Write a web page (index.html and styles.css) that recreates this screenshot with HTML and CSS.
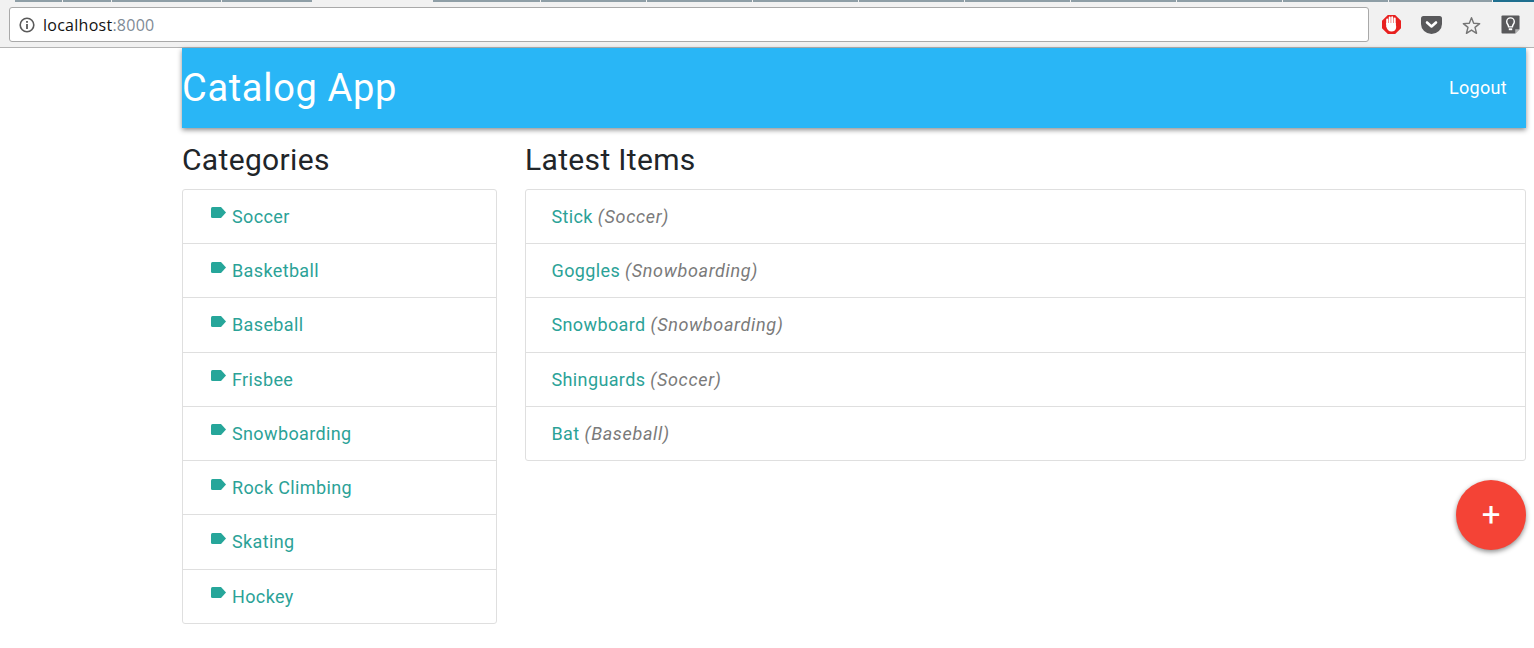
FILE: index.html
```html
<!DOCTYPE html>
<html lang="en">
<head>
<meta charset="utf-8">
<title>Catalog App</title>
<link rel="stylesheet" href="styles.css">
</head>
<body>
<div class="chrome">
  <div class="tabs">
    <span class="tab t-a"></span><span class="tab t-b"></span><span class="tab t-c"></span><span class="tab t-d"></span><span class="tab t-e"></span>
    <span class="tab-active"></span>
    <span class="tab t-first"></span><span class="tab t-n"></span><span class="tab t-n"></span><span class="tab t-n"></span><span class="tab t-n"></span><span class="tab t-n"></span><span class="tab t-n"></span><span class="tab t-n"></span><span class="tab t-n"></span><span class="tab t-end"></span>
    <span class="tab t-last"></span>
  </div>
  <div class="toolbar">
    <div class="omnibox">
      <svg class="info" width="16" height="16" viewBox="0 0 16 16"><circle cx="8" cy="8" r="6.8" fill="none" stroke="#5a5a5a" stroke-width="1.6"/><rect x="7.1" y="7" width="1.8" height="5" fill="#5a5a5a"/><rect x="7.1" y="4" width="1.8" height="1.8" fill="#5a5a5a"/></svg>
      <span class="host">localhost</span><span class="port">:8000</span>
    </div>
    <div class="exts">
      <svg class="ext" width="19" height="19" viewBox="0 0 19 19"><polygon points="5.8,0 13.2,0 19,5.8 19,13.2 13.2,19 5.8,19 0,13.2 0,5.8" fill="#e8201f"/><path d="M5.2 9 V4.6 M7.7 9 V2.6 M10.2 9 V2.2 M12.7 9 V3.4" fill="none" stroke="#fff" stroke-width="2" stroke-linecap="round"/><path d="M4.2 8 H13.7 L14.2 12 C14.2 15 12 16.6 9.5 16.6 C6.8 16.6 5.2 15 4.2 11.5 Z" fill="#fff"/></svg>
      <svg class="ext" width="21" height="18" viewBox="0 0 21 18"><path d="M0 2.5 Q0 0 2.5 0 H18.5 Q21 0 21 2.5 V8 A10.5 10 0 0 1 0 8 Z" fill="#59595b"/><path d="M6 6.5 L10.5 10.5 L15 6.5" fill="none" stroke="#fff" stroke-width="2.6" stroke-linecap="round" stroke-linejoin="round"/></svg>
      <svg class="ext star" width="19" height="19" viewBox="0 0 20 20"><polygon points="10,1.8 12.3,7.6 18.6,8 13.7,12 15.3,18.2 10,14.8 4.7,18.2 6.3,12 1.4,8 7.7,7.6" fill="none" stroke="#757575" stroke-width="1.5" stroke-linejoin="round"/></svg>
      <svg class="ext" width="19" height="19" viewBox="0 0 20 20"><path d="M1.5 0.5 H18.5 Q19.5 0.5 19.5 1.5 V15 L15 19.5 H1.5 Q0.5 19.5 0.5 18.5 V1.5 Q0.5 0.5 1.5 0.5 Z" fill="#59595b"/><path d="M15 19.5 V15 H19.5 Z" fill="#b5b5b5"/><path d="M8 12.5 C8 10 6 9.5 6 7 A4 4 0 0 1 14 7 C14 9.5 12 10 12 12.5 Z" fill="none" stroke="#fff" stroke-width="1.5"/><rect x="8.2" y="14" width="3.6" height="2" fill="#fff"/></svg>
    </div>
  </div>
</div>
<div class="page">
  <header class="appbar">
    <a class="brand">Catalog App</a>
    <a class="logout">Logout</a>
  </header>
  <main class="columns">
    <section class="col-side">
      <h3 class="heading">Categories</h3>
      <ul class="list">
        <li class="row"><svg class="tag" width="15" height="11" viewBox="0 0 15 11"><path d="M1.5 0 H10 L15 5.5 L10 11 H1.5 Q0 11 0 9.5 V1.5 Q0 0 1.5 0 Z"/></svg><a class="link">Soccer</a></li>
        <li class="row"><svg class="tag" width="15" height="11" viewBox="0 0 15 11"><path d="M1.5 0 H10 L15 5.5 L10 11 H1.5 Q0 11 0 9.5 V1.5 Q0 0 1.5 0 Z"/></svg><a class="link">Basketball</a></li>
        <li class="row"><svg class="tag" width="15" height="11" viewBox="0 0 15 11"><path d="M1.5 0 H10 L15 5.5 L10 11 H1.5 Q0 11 0 9.5 V1.5 Q0 0 1.5 0 Z"/></svg><a class="link">Baseball</a></li>
        <li class="row"><svg class="tag" width="15" height="11" viewBox="0 0 15 11"><path d="M1.5 0 H10 L15 5.5 L10 11 H1.5 Q0 11 0 9.5 V1.5 Q0 0 1.5 0 Z"/></svg><a class="link">Frisbee</a></li>
        <li class="row"><svg class="tag" width="15" height="11" viewBox="0 0 15 11"><path d="M1.5 0 H10 L15 5.5 L10 11 H1.5 Q0 11 0 9.5 V1.5 Q0 0 1.5 0 Z"/></svg><a class="link">Snowboarding</a></li>
        <li class="row"><svg class="tag" width="15" height="11" viewBox="0 0 15 11"><path d="M1.5 0 H10 L15 5.5 L10 11 H1.5 Q0 11 0 9.5 V1.5 Q0 0 1.5 0 Z"/></svg><a class="link">Rock Climbing</a></li>
        <li class="row"><svg class="tag" width="15" height="11" viewBox="0 0 15 11"><path d="M1.5 0 H10 L15 5.5 L10 11 H1.5 Q0 11 0 9.5 V1.5 Q0 0 1.5 0 Z"/></svg><a class="link">Skating</a></li>
        <li class="row"><svg class="tag" width="15" height="11" viewBox="0 0 15 11"><path d="M1.5 0 H10 L15 5.5 L10 11 H1.5 Q0 11 0 9.5 V1.5 Q0 0 1.5 0 Z"/></svg><a class="link">Hockey</a></li>
      </ul>
    </section>
    <section class="col-main">
      <h3 class="heading">Latest Items</h3>
      <ul class="list">
        <li class="row row-item"><a class="link">Stick</a> <em class="cat">(Soccer)</em></li>
        <li class="row row-item"><a class="link">Goggles</a> <em class="cat">(Snowboarding)</em></li>
        <li class="row row-item"><a class="link">Snowboard</a> <em class="cat">(Snowboarding)</em></li>
        <li class="row row-item"><a class="link">Shinguards</a> <em class="cat">(Soccer)</em></li>
        <li class="row row-item"><a class="link">Bat</a> <em class="cat">(Baseball)</em></li>
      </ul>
      <div class="fab-wrap"><button class="fab">+</button></div>
    </section>
  </main>
</div>
</body>
</html>
```
FILE: styles.css
```css
* { box-sizing: border-box; }
html, body { margin: 0; padding: 0; }
body {
  background: #fff;
  font-family: Roboto, "Liberation Sans", sans-serif;
  color: #212529;
  overflow: hidden;
  height: 648px;
}
.chrome {
  height: 48px;
  background: #f1f1f1;
  border-bottom: 1px solid #b4b4b4;
}
.tabs { display: flex; height: 2px; }
.tab { display: block; height: 2px; background: #8e9ea6; border-right: 1px solid #f1f1f1; }
.t-a { width: 15px; background: transparent; border: 0; }
.t-b { width: 48px; }
.t-c { width: 49px; }
.t-d { width: 110px; }
.t-e { width: 91px; }
.tab-active { display: block; width: 120px; }
.t-first { width: 108px; }
.t-n { width: 106px; }
.t-end { width: 104px; }
.t-last { flex: 1; background: #1f6f8f; border: 0; }
.toolbar {
  display: flex;
  align-items: flex-start;
  padding: 5px 0 0 9px;
}
.omnibox {
  width: 1360px;
  height: 35px;
  background: #fff;
  border: 1px solid #a9a9a9;
  border-radius: 3px;
  display: flex;
  align-items: center;
  padding-left: 9px;
  font-family: "Open Sans", "Liberation Sans", sans-serif;
  font-size: 16px;
  letter-spacing: 0.26px;
}
.info { margin-right: 8px; }
.host { color: #111; }
.port { color: #7f8b96; }
.exts {
  display: flex;
  align-items: center;
  height: 35px;
  margin-left: 13px;
  gap: 20px;
}
.star { margin-top: 2px; }
.page { padding: 0 8px 0 182px; }
.appbar {
  height: 80px;
  background: #29b6f6;
  display: flex;
  justify-content: space-between;
  align-items: center;
  padding-right: 19px;
  color: #fff;
  box-shadow: 0 2px 5px rgba(0, 0, 0, .45);
}
.brand { font-size: 38px; font-weight: 400; line-height: 1; letter-spacing: 0.68px; }
.logout { font-size: 18px; letter-spacing: 0.33px; margin-top: -2px; }
.columns {
  display: flex;
  gap: 28px;
  align-items: flex-start;
}
.col-side { width: 315px; flex: none; }
.col-main { flex: 1; min-width: 0; }
.heading {
  margin: 0;
  padding-top: 14px;
  height: 60.9px;
  font-size: 30px;
  font-weight: 400;
  line-height: 36px;
  letter-spacing: 0.34px;
  color: #212529;
}
.list {
  list-style: none;
  margin: 0;
  padding: 0;
  border: 1px solid #dfdfdf;
  border-radius: 3px;
}
.row {
  height: 54.25px;
  padding: 0 0 0.5px 28px;
  display: flex;
  align-items: center;
  font-size: 18px;
  letter-spacing: 0.37px;
  border-bottom: 1px solid #dfdfdf;
}
.row:last-child { border-bottom: 0; height: 53.35px; }
.row-item { padding-left: 25.5px; gap: 5px; }
.tag { fill: #26a69a; margin: -7px 6px 0 0; flex: none; }
.link { color: #2ba297; }
.cat { color: #7a7a7a; font-style: italic; letter-spacing: 0.66px; }
.fab-wrap { display: flex; justify-content: flex-end; padding-top: 19px; }
.fab {
  width: 70px;
  height: 70px;
  border: 0;
  padding: 0;
  border-radius: 50%;
  background: #f44336;
  color: #fff;
  font-family: Roboto, sans-serif;
  font-size: 33px;
  font-weight: 400;
  line-height: 70px;
  box-shadow: 0 2px 5px rgba(0, 0, 0, .45);
}
```
